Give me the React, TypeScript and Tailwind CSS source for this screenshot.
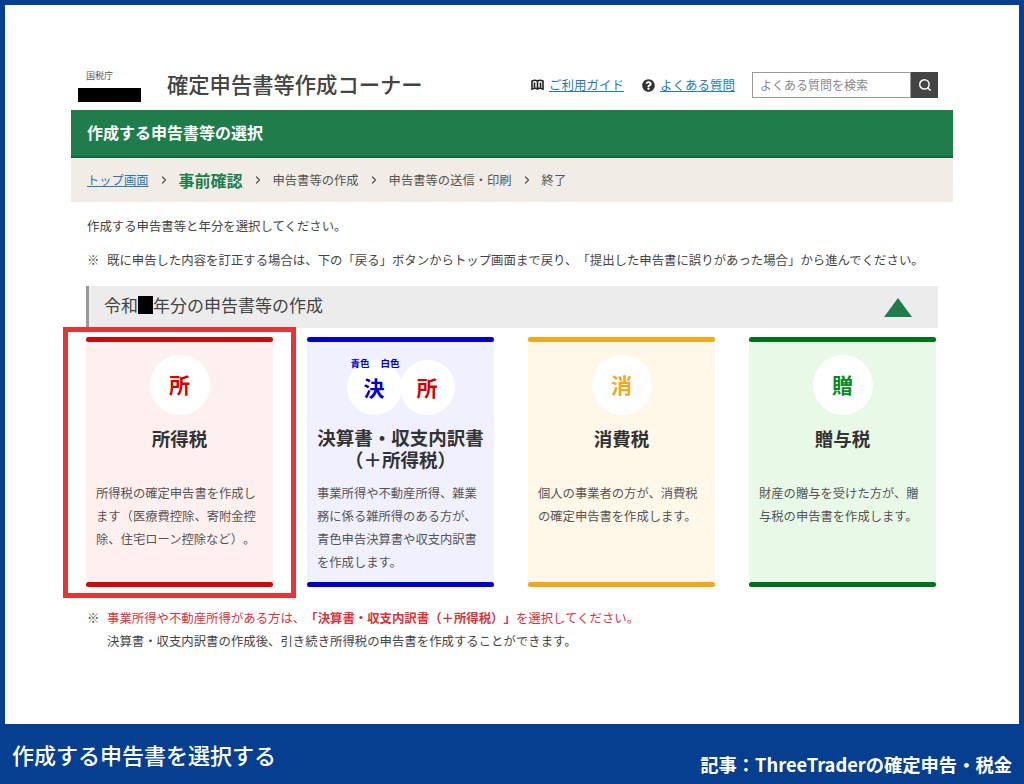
import { ChevronRight, Search } from 'lucide-react';
import { FaQuestionCircle } from 'react-icons/fa';

const FONT = "font-['Noto_Sans_CJK_JP','Noto_Sans',sans-serif]";

type Card = {
  bg: string;
  bar: string;
  titleLines: string[];
  desc: string[];
  glyph?: string;
  glyphColor?: string;
};

const cards: Card[] = [
  {
    bg: 'bg-[#fff0f0]',
    bar: 'bg-[#cc0a0a]',
    titleLines: ['所得税'],
    glyph: '所',
    glyphColor: 'text-[#d40000]',
    desc: ['所得税の確定申告書を作成し', 'ます（医療費控除、寄附金控', '除、住宅ローン控除など）。'],
  },
  {
    bg: 'bg-[#f0f0ff]',
    bar: 'bg-[#0000c8]',
    titleLines: ['決算書・収支内訳書', '（＋所得税）'],
    desc: ['事業所得や不動産所得、雑業', '務に係る雑所得のある方が、', '青色申告決算書や収支内訳書', 'を作成します。'],
  },
  {
    bg: 'bg-[#fff7e8]',
    bar: 'bg-[#f0a81e]',
    titleLines: ['消費税'],
    glyph: '消',
    glyphColor: 'text-[#f0a81e]',
    desc: ['個人の事業者の方が、消費税', 'の確定申告書を作成します。'],
  },
  {
    bg: 'bg-[#e8f9e8]',
    bar: 'bg-[#00701a]',
    titleLines: ['贈与税'],
    glyph: '贈',
    glyphColor: 'text-[#0a8a1e]',
    desc: ['財産の贈与を受けた方が、贈', '与税の申告書を作成します。'],
  },
];

function Crumb() {
  return (
    <span className="w-[30px] shrink-0 flex justify-center">
      <ChevronRight size={12} strokeWidth={2.5} className="text-[#555]" />
    </span>
  );
}

function TaxCard({ card }: { card: Card }) {
  return (
    <div className={`w-[187px] h-[250px] flex flex-col ${card.bg}`}>
      <div className={`h-[5px] rounded-sm shrink-0 ${card.bar}`} />
      <div className="h-[140px] shrink-0 flex flex-col items-center">
        {card.glyph ? (
          <div className="mt-[13px] w-[60px] h-[60px] rounded-full bg-white flex items-center justify-center">
            <span className={`text-[21px] font-bold ${card.glyphColor}`}>{card.glyph}</span>
          </div>
        ) : (
          <div className="relative mt-[18px] h-[55px] flex">
            <div className="w-[55px] h-[55px] rounded-full bg-white flex items-center justify-center">
              <span className="text-[21px] font-bold text-[#0000c8]">決</span>
            </div>
            <div className="w-[55px] h-[55px] -ml-[2px] rounded-full bg-white flex items-center justify-center">
              <span className="text-[21px] font-bold text-[#d40000]">所</span>
            </div>
            <div className="absolute left-[4px] -top-[3px] flex gap-[11px] text-[9.5px] leading-[12px] font-bold text-[#0000c8]">
              <span>青色</span>
              <span>白色</span>
            </div>
          </div>
        )}
        <div className={`${card.glyph ? 'mt-[12px]' : 'mt-[11px]'} text-[18.5px] leading-[22px] font-semibold text-[#333] text-center whitespace-nowrap`}>
          {card.titleLines.map((line) => (
            <div key={line}>{line}</div>
          ))}
        </div>
      </div>
      <div className="flex-1 pl-[10px] text-[12.3px] leading-[23px] text-[#555] whitespace-nowrap">
        {card.desc.map((line) => (
          <div key={line}>{line}</div>
        ))}
      </div>
      <div className={`h-[5px] rounded-sm shrink-0 ${card.bar}`} />
    </div>
  );
}

export default function App() {
  return (
    <div className={`w-[1024px] h-[784px] flex flex-col bg-[#063f8f] [text-spacing-trim:space-all] ${FONT}`}>
      <div className="mx-[5px] mt-[5px] h-[719px] bg-white px-[66px] pt-[65px] shrink-0">
        <div className="h-[40px] flex items-start">
          <div className="ml-[7px] w-[63px] shrink-0">
            <div className="ml-[8px] text-[9px] leading-[12px] text-[#555]">国税庁</div>
            <div className="mt-[6px] h-[14px] bg-black" />
          </div>
          <div className="ml-[26px] text-[21.3px] leading-[30px] mt-[-1px] font-medium text-[#444] whitespace-nowrap">
            確定申告書等作成コーナー
          </div>
          <div className="ml-auto mr-[15px] flex items-center mt-[2px]">
            <svg width="13" height="12" viewBox="0 0 13 12" className="text-[#222]">
              <path d="M1 2c2-1 4-1 5.5 0C8 1 10 1 12 2v8c-2-1-4-1-5.5 0C5 9 3 9 1 10zM6.5 2v8M3.5 3.5v5M9.5 3.5v5" fill="none" stroke="currentColor" strokeWidth="1.6" />
            </svg>
            <a className="ml-[5px] text-[12.5px] text-[#2a7ab0] underline whitespace-nowrap">ご利用ガイド</a>
            <FaQuestionCircle className="ml-[18px] text-[13px] text-[#333]" />
            <a className="ml-[5px] text-[12.5px] text-[#2a7ab0] underline whitespace-nowrap">よくある質問</a>
            <div className="ml-[17px] w-[159px] h-[26px] border border-[#999] pl-[7px] flex items-center text-[12px] text-[#888] whitespace-nowrap">
              よくある質問を検索
            </div>
            <div className="w-[27px] h-[26px] bg-[#444] flex items-center justify-center">
              <Search size={14} strokeWidth={2.5} className="text-white" />
            </div>
          </div>
        </div>

        <div className="h-[48px] bg-[#1e7d4b] border-b-2 border-[#166338] pl-[16px] pb-[2px] flex items-center">
          <span className="text-[16px] font-bold text-white">作成する申告書等の選択</span>
        </div>

        <div className="h-[44px] bg-[#f1ece5] pl-[16px] flex items-center text-[12.3px] text-[#555] whitespace-nowrap">
          <a className="text-[#2a7ab0] underline">トップ画面</a>
          <Crumb />
          <span className="text-[16px] font-bold text-[#1e7d4b]">事前確認</span>
          <Crumb />
          <span>申告書等の作成</span>
          <Crumb />
          <span>申告書等の送信・印刷</span>
          <Crumb />
          <span>終了</span>
        </div>

        <div className="mt-[15px] ml-[16px] text-[12.4px] leading-[18px] text-[#444] whitespace-nowrap">
          作成する申告書等と年分を選択してください。
        </div>
        <div className="mt-[16px] ml-[16px] text-[12.4px] leading-[18px] text-[#444] whitespace-nowrap flex">
          <span className="w-[20px] shrink-0">※</span>
          <span>既に申告した内容を訂正する場合は、下の「戻る」ボタンからトップ画面まで戻り、「提出した申告書に誤りがあった場合」から進んでください。</span>
        </div>

        <div className="mt-[17px] ml-[15px] w-[852px] h-[42px] bg-[#ececec] border-l-[3px] border-[#999] pl-[15px] pr-[26px] flex items-center justify-between">
          <span className="text-[17px] text-[#444] flex items-center whitespace-nowrap mb-[4px]">
            令和<span className="inline-block w-[15px] h-[18px] bg-black" />年分の申告書等の作成
          </span>
          <div className="w-0 h-0 border-l-[14.5px] border-r-[14.5px] border-b-[19px] border-l-transparent border-r-transparent border-b-[#1e7d4b]" />
        </div>

        <div className="relative mt-[9px] ml-[15px] flex gap-[34px]">
          {cards.map((card) => (
            <TaxCard key={card.titleLines[0]} card={card} />
          ))}
          <div className="absolute -left-[23px] -top-[10px] w-[233px] h-[271px] border-[5px] border-[#e53535]" />
        </div>

        <div className="mt-[20px] ml-[16px] text-[12.4px] leading-[23px] text-[#444] whitespace-nowrap">
          <div className="flex">
            <span className="w-[20px] shrink-0">※</span>
            <span className="text-[#d9323c]">
              事業所得や不動産所得がある方は、<span className="font-bold">「決算書・収支内訳書（＋所得税）」</span>を選択してください。
            </span>
          </div>
          <div className="pl-[20px]">決算書・収支内訳書の作成後、引き続き所得税の申告書を作成することができます。</div>
        </div>
      </div>

      <div className="flex-1 relative px-[12px] text-white">
        <div className="pt-[14px] text-[22px] leading-[32px] font-medium whitespace-nowrap">作成する申告書を選択する</div>
        <div className="absolute right-[12px] bottom-[8px] text-[18.3px] leading-[24px] font-semibold whitespace-nowrap">記事：ThreeTraderの確定申告・税金</div>
      </div>
    </div>
  );
}
